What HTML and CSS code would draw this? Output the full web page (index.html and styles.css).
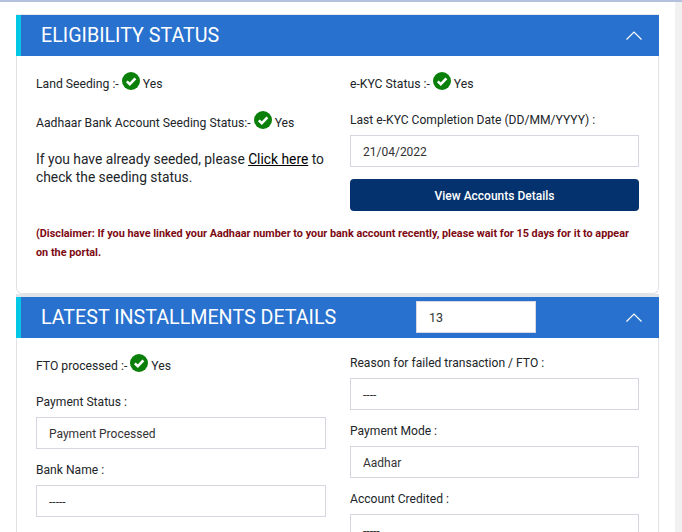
FILE: index.html
```html
<!DOCTYPE html>
<html lang="en">
<head>
<meta charset="utf-8">
<title>Eligibility Status</title>
<link rel="stylesheet" href="styles.css">
</head>
<body>
<div class="page">
  <main class="content">
    <section class="card card-first">
      <header class="card-head">
        <h2>ELIGIBILITY STATUS</h2>
        <svg class="chev" viewBox="0 0 16 9"><path d="M0.5 8.5 L8 1 L15.5 8.5"/></svg>
      </header>
      <div class="card-body eligibility">
        <div class="cols">
          <div class="col">
            <div class="status s1">Land Seeding :- <svg class="tick" viewBox="0 0 18 18"><circle cx="9" cy="9" r="9"/><path d="M4.8 9.4 L7.8 12.2 L13.4 6.4"/></svg> Yes</div>
            <div class="status s2">Aadhaar Bank Account Seeding Status:- <svg class="tick" viewBox="0 0 18 18"><circle cx="9" cy="9" r="9"/><path d="M4.8 9.4 L7.8 12.2 L13.4 6.4"/></svg> Yes</div>
            <p class="seed">If you have already seeded, please <a href="#">Click here</a> to check the seeding status.</p>
          </div>
          <div class="col">
            <div class="status s1">e-KYC Status :- <svg class="tick" viewBox="0 0 18 18"><circle cx="9" cy="9" r="9"/><path d="M4.8 9.4 L7.8 12.2 L13.4 6.4"/></svg> Yes</div>
            <div class="label l-date">Last e-KYC Completion Date (DD/MM/YYYY) :</div>
            <div class="field">21/04/2022</div>
            <button class="btn">View Accounts Details</button>
          </div>
        </div>
        <p class="disclaimer">(Disclaimer: If you have linked your Aadhaar number to your bank account recently, please wait for 15 days for it to appear on the portal.</p>
      </div>
    </section>
    <section class="card card-second">
      <header class="card-head">
        <h2>LATEST INSTALLMENTS DETAILS</h2>
        <div class="select">13</div>
        <svg class="chev" viewBox="0 0 16 9"><path d="M0.5 8.5 L8 1 L15.5 8.5"/></svg>
      </header>
      <div class="card-body">
        <div class="cols">
          <div class="col">
            <div class="status s3">FTO processed :- <svg class="tick" viewBox="0 0 18 18"><circle cx="9" cy="9" r="9"/><path d="M4.8 9.4 L7.8 12.2 L13.4 6.4"/></svg> Yes</div>
            <div class="label l-pay">Payment Status :</div>
            <div class="field">Payment Processed</div>
            <div class="label l-next">Bank Name :</div>
            <div class="field">-----</div>
          </div>
          <div class="col">
            <div class="label l-reason">Reason for failed transaction / FTO :</div>
            <div class="field">----</div>
            <div class="label l-next">Payment Mode :</div>
            <div class="field">Aadhar</div>
            <div class="label l-next">Account Credited :</div>
            <div class="field">-----</div>
          </div>
        </div>
      </div>
    </section>
  </main>
  <div class="scrollbar"></div>
</div>
</body>
</html>
```
FILE: styles.css
```css
* { box-sizing: border-box; }
html, body { margin: 0; height: 100%; overflow: hidden; }
body { font-family: Roboto, "Liberation Sans", sans-serif; color: #212529; background: #fff; font-size: 12px; }
.page { display: flex; height: 532px; border-top: 2px solid #b4c0de; }
.content { flex: 1; padding: 13px 16px 0 16px; min-width: 0; }
.scrollbar { width: 7px; background: #f1f1f1; }
.card { border: 1px solid #e2e2e6; border-top: 0; border-radius: 0 0 6px 6px; background: #fff; }
.card-first { height: 279px; }
.card-second { border-top: 3px solid #e0e4e8; border-bottom: 0; border-radius: 0; }
.card-head { height: 41px; margin: 0 -1px; background: #2871ce; border-left: 5px solid #00c8e6; display: flex; align-items: center; padding: 0 17px 0 20px; color: #fff; position: relative; }
.card-first .card-head { box-shadow: 0 -1px 0 #e8e8ec; }
.card-head h2 { margin: 0; font-size: 19.68px; font-weight: 400; line-height: 1; flex: 1; }
.chev { width: 16px; height: 9px; fill: none; stroke: #fff; stroke-width: 1.2; flex: none; }
.select { position: absolute; left: 395px; top: 4px; width: 120px; height: 32px; background: #fff; border: 1px solid #d8d8e4; color: #333; font-size: 12.5px; line-height: 32px; padding-left: 12px; }
.card-body { padding: 0 19px; }
.cols { display: grid; grid-template-columns: 290px 289px; column-gap: 24px; }
.col { min-width: 0; }
.status { font-size: 12.2px; display: flex; align-items: center; height: 18px; white-space: pre; }
.tick { width: 18px; height: 18px; margin: 0 0 6px 0; flex: none; }
.tick circle { fill: #0a800a; }
.tick path { fill: none; stroke: #fff; stroke-width: 2.6; }
.s1 { margin-top: 19px; }
.s2 { margin-top: 21px; }
.s3 { margin-top: 19px; }
.seed { margin: 18px 0 0; font-size: 13.8px; line-height: 18px; color: #212529; }
.seed a { color: #000; text-decoration: underline; }
.label { font-size: 12.1px; line-height: 14px; }
.l-date { margin-top: 20px; }
.l-pay { margin-top: 20px; }
.l-next { margin-top: 14px; }
.l-reason { margin-top: 18px; }
.field { height: 32px; margin-top: 8px; border: 1px solid #d6d6e2; background: #fff; font-size: 12px; line-height: 32px; padding-left: 12px; color: #333; }
.btn { display: block; width: 100%; height: 32px; margin-top: 12px; padding: 1px 0 0; border: 0; border-radius: 4px; background: #04326e; color: #fff; font: 500 12px Roboto, "Liberation Sans", sans-serif; }
.disclaimer { margin: 13px 0 0; font-size: 10.85px; line-height: 19px; font-weight: 700; color: #7d0a12; }
```
